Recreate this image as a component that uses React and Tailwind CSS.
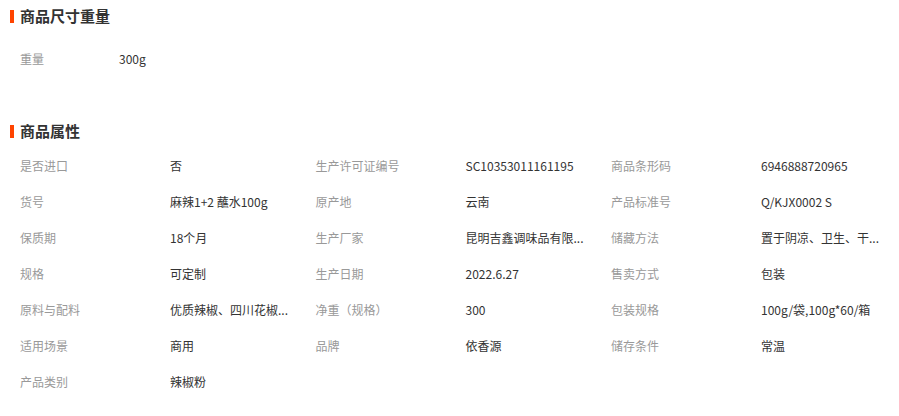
import React from 'react';

const attrs = [
  ['是否进口', '否', '生产许可证编号', 'SC10353011161195', '商品条形码', '6946888720965'],
  ['货号', '麻辣1+2 蘸水100g', '原产地', '云南', '产品标准号', 'Q/KJX0002 S'],
  ['保质期', '18个月', '生产厂家', '昆明吉鑫调味品有限...', '储藏方法', '置于阴凉、卫生、干...'],
  ['规格', '可定制', '生产日期', '2022.6.27', '售卖方式', '包装'],
  ['原料与配料', '优质辣椒、四川花椒...', '净重（规格）', '300', '包装规格', '100g/袋,100g*60/箱'],
  ['适用场景', '商用', '品牌', '依香源', '储存条件', '常温'],
  ['产品类别', '辣椒粉'],
];

const SectionTitle = ({ children }) => (
  <div className="flex items-center h-[32px]">
    <span className="w-[4px] h-[13px] bg-[#ff4400] mr-[6px]" />
    <h3 className="text-[15px] font-bold text-[#333]">{children}</h3>
  </div>
);

const Cell = ({ label, value }) => (
  <div className="flex shrink-0 w-[295.5px] h-[36px] items-center">
    <span className="w-[150px] shrink-0 text-[#999]">{label}</span>
    <span className="whitespace-nowrap text-[#333]">{value}</span>
  </div>
);

export default function App() {
  return (
    <div
      className="bg-white w-[899px] h-[416px] overflow-hidden pl-[10px] text-[12px]"
      style={{ fontFamily: '"Noto Sans CJK SC", "Liberation Sans", sans-serif' }}
    >
      <SectionTitle>商品尺寸重量</SectionTitle>
      <div className="mt-[9px] flex h-[36px] items-center pl-[10px]">
        <span className="w-[99px] text-[#999]">重量</span>
        <span className="text-[#333]">300g</span>
      </div>

      <div className="mt-[38px]">
        <SectionTitle>商品属性</SectionTitle>
        <div className="mt-[1px] pl-[10px]">
          {attrs.map((row, i) => (
            <div key={i} className="flex">
              {[0, 2, 4].filter((j) => row[j]).map((j) => (
                <Cell key={j} label={row[j]} value={row[j + 1]} />
              ))}
            </div>
          ))}
        </div>
      </div>
    </div>
  );
}
